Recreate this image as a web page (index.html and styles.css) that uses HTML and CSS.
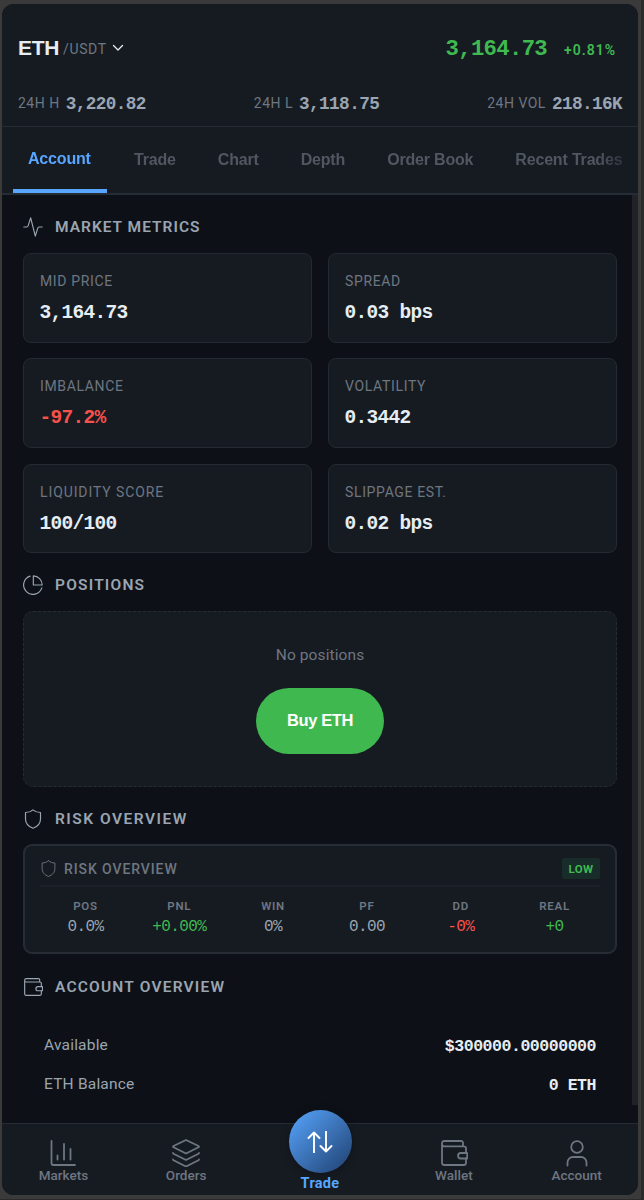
FILE: index.html
```html
<!DOCTYPE html>
<html lang="en">
<head>
    <meta charset="UTF-8">
    <meta name="viewport" content="width=device-width, initial-scale=1.0">
    <title>ETH/USDT</title>
    <link rel="stylesheet" href="styles.css">
</head>
<body>

<div class="app">
    <header class="header">
        <div class="header-top">
            <div class="pair">
                <span class="pair-base">ETH</span>
                <span class="pair-quote">/USDT</span>
                <svg class="pair-arrow" viewBox="0 0 12 12"><path d="M1.5 3.5 6 8l4.5-4.5"/></svg>
            </div>
            <div class="price-box">
                <span class="price">3,164.73</span>
                <span class="change">+0.81%</span>
            </div>
        </div>
        <div class="header-stats">
            <div class="stat"><span class="stat-label">24H H</span><span class="stat-value">3,220.82</span></div>
            <div class="stat"><span class="stat-label">24H L</span><span class="stat-value">3,118.75</span></div>
            <div class="stat"><span class="stat-label">24H VOL</span><span class="stat-value">218.16K</span></div>
        </div>
    </header>

    <nav class="tabs">
        <div class="tabs-scroll">
            <a class="tab active">Account</a>
            <a class="tab">Trade</a>
            <a class="tab">Chart</a>
            <a class="tab">Depth</a>
            <a class="tab">Order Book</a>
            <a class="tab">Recent Trades</a>
        </div>
    </nav>

    <main class="main">
        <div class="content">
            <h2 class="section-title">
                <svg class="icon" viewBox="0 0 24 24"><path d="M1 12h3.5c.9 0 1.3-.5 1.6-1.3L9.2 1l5.6 22 2.9-9.6c.3-.9.8-1.4 1.7-1.4H23"/></svg>
                <span class="title-market">Market Metrics</span>
            </h2>
            <div class="metrics">
                <div class="metric-card"><div class="metric-label">Mid Price</div><div class="metric-value">3,164.73</div></div>
                <div class="metric-card"><div class="metric-label">Spread</div><div class="metric-value">0.03 bps</div></div>
                <div class="metric-card"><div class="metric-label">Imbalance</div><div class="metric-value negative">-97.2%</div></div>
                <div class="metric-card"><div class="metric-label">Volatility</div><div class="metric-value">0.3442</div></div>
                <div class="metric-card"><div class="metric-label wide">Liquidity Score</div><div class="metric-value">100/100</div></div>
                <div class="metric-card"><div class="metric-label">Slippage Est.</div><div class="metric-value">0.02 bps</div></div>
            </div>

            <h2 class="section-title">
                <svg class="icon" viewBox="0 0 24 24"><path d="M8.5 1.4A11.2 11.2 0 1 0 22.6 15.5"/><path d="M12.4 1A10.8 10.8 0 0 1 23 12H12.4Z"/></svg>
                <span>Positions</span>
            </h2>
            <div class="empty-box">
                <div class="empty-text">No positions</div>
                <button class="buy-btn">Buy ETH</button>
            </div>

            <h2 class="section-title">
                <svg class="icon" viewBox="0 0 24 24"><path d="M12 1c2.5 2.3 5.6 3.2 9 3.2V12c0 5.6-3.5 9-9 11.2C6.5 21 3 17.6 3 12V4.2C6.4 4.2 9.5 3.3 12 1Z"/></svg>
                <span class="title-risk">Risk Overview</span>
            </h2>
            <div class="risk-card">
                <div class="risk-header">
                    <div class="risk-name">
                        <svg class="risk-icon" viewBox="0 0 24 24"><path d="M12 1c2.5 2.3 5.6 3.2 9 3.2V12c0 5.6-3.5 9-9 11.2C6.5 21 3 17.6 3 12V4.2C6.4 4.2 9.5 3.3 12 1Z"/></svg>
                        <span>Risk Overview</span>
                    </div>
                    <span class="risk-badge">LOW</span>
                </div>
                <div class="risk-grid">
                    <div class="risk-item"><div class="risk-label">POS</div><div class="risk-value">0.0%</div></div>
                    <div class="risk-item"><div class="risk-label">PNL</div><div class="risk-value positive">+0.00%</div></div>
                    <div class="risk-item"><div class="risk-label">WIN</div><div class="risk-value">0%</div></div>
                    <div class="risk-item"><div class="risk-label">PF</div><div class="risk-value">0.00</div></div>
                    <div class="risk-item"><div class="risk-label">DD</div><div class="risk-value negative">-0%</div></div>
                    <div class="risk-item"><div class="risk-label">REAL</div><div class="risk-value positive">+0</div></div>
                </div>
            </div>

            <h2 class="section-title">
                <svg class="icon" viewBox="0 0 24 24"><path d="M20 5.5V3.4A1.4 1.4 0 0 0 18.6 2H4a2 2 0 0 0-2 2v16.5A1.5 1.5 0 0 0 3.5 22h17a1.5 1.5 0 0 0 1.5-1.5v-4M2 4.5c0 1 .8 1.5 1.8 1.5h16.7A1.5 1.5 0 0 1 22 7.5v4"/><path d="M23.4 11.5v5h-5.4a2.5 2.5 0 0 1 0-5Z"/></svg>
                <span>Account Overview</span>
            </h2>
            <div class="account-rows">
                <div class="account-row"><span class="row-label">Available</span><span class="row-value">$300000.00000000</span></div>
                <div class="account-row"><span class="row-label">ETH Balance</span><span class="row-value">0 ETH</span></div>
            </div>
        </div>
        <div class="scrollbar"></div>
    </main>

    <nav class="bottom-nav">
        <a class="nav-item">
            <svg class="nav-icon" viewBox="0 0 28 28"><path d="M2.5 2v22a2 2 0 0 0 2 2H26M8.5 16.5v4M15 5v15.5M21.5 10v10.5"/></svg>
            <span>Markets</span>
        </a>
        <a class="nav-item">
            <svg class="nav-icon" viewBox="0 0 28 28"><path d="m14 1 12.5 6c.7.4.7.9 0 1.3L14 14.5 1.5 8.3c-.7-.4-.7-.9 0-1.3ZM1 14c0 .4.2.6.5.8L14 21l12.5-6.2c.3-.2.5-.4.5-.8M1 20.500c0 .4.2.6.5.8L14 27.500l12.5-6.200c.3-.2.5-.4.5-.8"/></svg>
            <span>Orders</span>
        </a>
        <a class="nav-item nav-trade">
            <div class="trade-circle">
                <svg viewBox="0 0 26 22"><path d="M7 21.5v-20M1.500 7 7 1.500 12.500 7M19 .5v20M13.500 15l5.500 5.500 5.500-5.500"/></svg>
            </div>
            <span>Trade</span>
        </a>
        <a class="nav-item">
            <svg class="nav-icon" viewBox="0 0 28 28"><path d="M23 7V3.800A1.800 1.800 0 0 0 21.200 2h-17A2.200 2.200 0 0 0 2 4.200v19.600A2.200 2.200 0 0 0 4.200 26h19.600a2.200 2.200 0 0 0 2.200-2.200v-4.300M2 5c0 1.400.8 2.300 2.200 2.300h19.600A2.200 2.200 0 0 1 26 9.500v4"/><path d="M27.200 14v5.500h-6.400a2.700 2.700 0 0 1 0-5.500Z"/></svg>
            <span>Wallet</span>
        </a>
        <a class="nav-item">
            <svg class="nav-icon" viewBox="0 0 28 28"><circle cx="14" cy="8" r="5.800"/><path d="M4.500 26.500v-3a5.500 5.500 0 0 1 5.500-5.500h8a5.500 5.500 0 0 1 5.500 5.500v3"/></svg>
            <span>Account</span>
        </a>
    </nav>
</div>

</body>
</html>
```
FILE: styles.css
```css
* {
    box-sizing: border-box;
}

body {
    margin: 0;
    height: 1200px;
    padding: 4px 3px 0 2px;
    overflow: hidden;
    background-color: #3a3a3a;
    border-right: 3px solid #2a2a2a;
    border-bottom: 1px solid #2a2a2a;
    font-family: Roboto, sans-serif;
    color: #e6edf3;
}

.app {
    display: flex;
    flex-direction: column;
    width: 636px;
    height: 1191px;
    background-color: #0d1117;
    border-radius: 12px;
    overflow: hidden;
}

svg {
    display: block;
    fill: none;
    stroke: currentColor;
    stroke-linecap: round;
    stroke-linejoin: round;
}

/* Header */
.header {
    height: 123px;
    padding: 28px 16px 0 16px;
    background-color: #161b22;
    border-bottom: 1px solid #262c34;
}

.header-top {
    display: flex;
    justify-content: space-between;
    align-items: center;
    height: 32px;
    padding-right: 6px;
}

.pair {
    display: flex;
    align-items: center;
}

.pair-base {
    font-family: "Liberation Sans", sans-serif;
    font-size: 21px;
    font-weight: bold;
    letter-spacing: -0.3px;
}

.pair-quote {
    margin: 2px 0 0 4px;
    font-size: 14px;
    letter-spacing: 0.6px;
    color: #6e7681;
}

.pair-arrow {
    width: 12px;
    height: 12px;
    margin-left: 5px;
    stroke-width: 1.3;
}

.price-box {
    display: flex;
    align-items: center;
    gap: 17px;
    color: #3fb950;
}

.price {
    margin-top: 2px;
    font-family: "Liberation Mono", monospace;
    font-size: 22.3px;
    font-weight: bold;
    letter-spacing: -0.7px;
}

.change {
    margin-top: 3px;
    font-size: 14px;
    font-weight: 600;
    letter-spacing: 1px;
}

.header-stats {
    display: flex;
    justify-content: space-between;
    height: 20px;
    margin-top: 29px;
}

.stat {
    display: flex;
    align-items: center;
    gap: 6px;
}

.stat-label {
    font-size: 14px;
    letter-spacing: 0.5px;
    color: #6e7681;
}

.stat-value {
    margin-top: 2px;
    font-family: "Liberation Mono", monospace;
    font-size: 17.7px;
    font-weight: bold;
    letter-spacing: -0.6px;
    color: #9aa5b1;
}

/* Tabs */
.tabs {
    height: 68px;
    background-color: #161b22;
    border-bottom: 2px solid #262c34;
}

.tabs-scroll {
    display: flex;
    gap: 12px;
    height: 66px;
    padding-left: 11px;
    -webkit-mask-image: linear-gradient(to right, #000 594px, transparent 640px);
    mask-image: linear-gradient(to right, #000 594px, transparent 640px);
}

.tab {
    flex: none;
    padding: 24px 15px 0;
    font-family: "Liberation Sans", sans-serif;
    font-size: 16px;
    font-weight: bold;
    line-height: 18px;
    letter-spacing: -0.18px;
    white-space: nowrap;
    color: #515761;
}

.tab.active {
    width: 94px;
    padding-top: 23px;
    color: #58a6ff;
    background: linear-gradient(#58a6ff, #58a6ff) bottom / 100% 4px no-repeat;
}

/* Content */
.main {
    display: flex;
    flex: 1;
}

.content {
    flex: 1;
    padding: 16px 15px 0 21px;
}

.scrollbar {
    width: 6px;
    height: 910px;
    background-color: #1f2227;
}

.section-title {
    display: flex;
    align-items: center;
    gap: 12px;
    height: 31px;
    margin: 0;
    font-size: 15.5px;
    font-weight: 600;
    letter-spacing: 1.2px;
    text-transform: uppercase;
    color: #9aa5b1;
}

.title-market {
    letter-spacing: 1px;
}

.title-risk {
    letter-spacing: 1.5px;
}

.icon {
    width: 20px;
    height: 20px;
    stroke-width: 1.4;
}

.metrics {
    display: grid;
    grid-template-columns: 1fr 1fr;
    gap: 15.8px 16px;
    margin: 11px 0 16.5px;
}

.metric-card {
    height: 89.5px;
    padding: 18px 16px;
    background-color: #161b22;
    border: 1px solid #242a31;
    border-radius: 8px;
}

.metric-label {
    font-size: 14px;
    line-height: 18px;
    letter-spacing: 0.65px;
    text-transform: uppercase;
    color: #6e7681;
}

.metric-label.wide {
    letter-spacing: 0.9px;
}

.metric-value {
    margin: 11px 0 0 -0.5px;
    font-family: "Liberation Mono", monospace;
    font-size: 19.5px;
    font-weight: bold;
    line-height: 24px;
    letter-spacing: -0.7px;
}

.positive {
    color: #3fb950;
}

.negative {
    color: #f85149;
}

.empty-box {
    display: flex;
    flex-direction: column;
    align-items: center;
    height: 176px;
    margin: 10.3px 0 16.5px;
    padding-top: 33px;
    background-color: #161b22;
    border: 1px dashed #262c34;
    border-radius: 10px;
}

.empty-text {
    font-size: 15.5px;
    line-height: 20px;
    letter-spacing: 0.1px;
    color: #6e7681;
}

.buy-btn {
    width: 128px;
    height: 66px;
    margin-top: 23px;
    padding: 0;
    background-color: #40b850;
    border: none;
    border-radius: 33px;
    font-family: "Liberation Sans", sans-serif;
    font-size: 16.5px;
    font-weight: bold;
    letter-spacing: -0.4px;
    color: #fff;
}

/* Risk */
.risk-card {
    height: 110.5px;
    margin: 9.5px 0 17px;
    padding: 12px 15px 0;
    background-color: #161b22;
    border: 2px solid #272d35;
    border-radius: 9px;
}

.risk-header {
    display: flex;
    justify-content: space-between;
    height: 29px;
    border-bottom: 2px solid #1c2129;
}

.risk-name {
    display: flex;
    align-items: center;
    gap: 7px;
    height: 22px;
    font-size: 14px;
    font-weight: 500;
    letter-spacing: 0.9px;
    text-transform: uppercase;
    color: #6e7681;
}

.risk-icon {
    width: 17px;
    height: 17px;
    stroke-width: 1.3;
}

.risk-badge {
    width: 38px;
    height: 21px;
    background-color: #182c29;
    border-radius: 2px;
    font-size: 11.5px;
    font-weight: 700;
    line-height: 22px;
    letter-spacing: 0.4px;
    text-align: center;
    color: #3fb950;
}

.risk-grid {
    display: grid;
    grid-template-columns: repeat(6, 1fr);
    gap: 3px;
    margin-top: 12px;
    text-align: center;
}

.risk-label {
    font-size: 11.5px;
    font-weight: 600;
    line-height: 14px;
    letter-spacing: 0.7px;
    color: #6e7681;
}

.risk-value {
    margin-top: 5px;
    font-family: "Liberation Mono", monospace;
    font-size: 16px;
    line-height: 18px;
    letter-spacing: -0.6px;
    color: #9aa5b1;
}

.risk-value.positive {
    color: #3fb950;
}

.risk-value.negative {
    color: #f85149;
}

.account-rows {
    margin-top: 23.5px;
    padding: 0 21px;
}

.account-row {
    display: flex;
    justify-content: space-between;
    align-items: center;
    height: 39px;
}

.row-label {
    font-size: 15.5px;
    letter-spacing: 0.2px;
    color: #9aa5b1;
}

.row-value {
    margin-top: 2px;
    font-family: "Liberation Mono", monospace;
    font-size: 16.6px;
    font-weight: bold;
    letter-spacing: -0.51px;
}

/* Bottom nav */
.bottom-nav {
    display: grid;
    grid-template-columns: 1fr 1fr 145px 1fr 1fr;
    flex: none;
    height: 72px;
    background-color: #161b22;
    border-top: 1px solid #262c34;
}

.nav-item {
    display: flex;
    flex-direction: column;
    align-items: center;
    padding-top: 15px;
    font-size: 13.5px;
    font-weight: 500;
    line-height: 16px;
    color: #6e7681;
}

.nav-icon {
    width: 28px;
    height: 28px;
    stroke-width: 1.8;
}

.nav-trade {
    padding-top: 0;
    font-size: 14.5px;
    font-weight: 700;
    line-height: 18px;
    letter-spacing: 0.3px;
    color: #58a6ff;
}

.trade-circle {
    display: flex;
    align-items: center;
    justify-content: center;
    width: 63px;
    height: 63px;
    margin: -14px 0 2px;
    background: linear-gradient(135deg, #58a6ff, #1f3f6e);
    border-radius: 50%;
    box-shadow: 0 2px 10px rgba(0, 0, 0, 0.3);
    color: #fff;
}

.trade-circle svg {
    width: 26px;
    height: 22px;
    stroke-width: 1.9;
}
```
